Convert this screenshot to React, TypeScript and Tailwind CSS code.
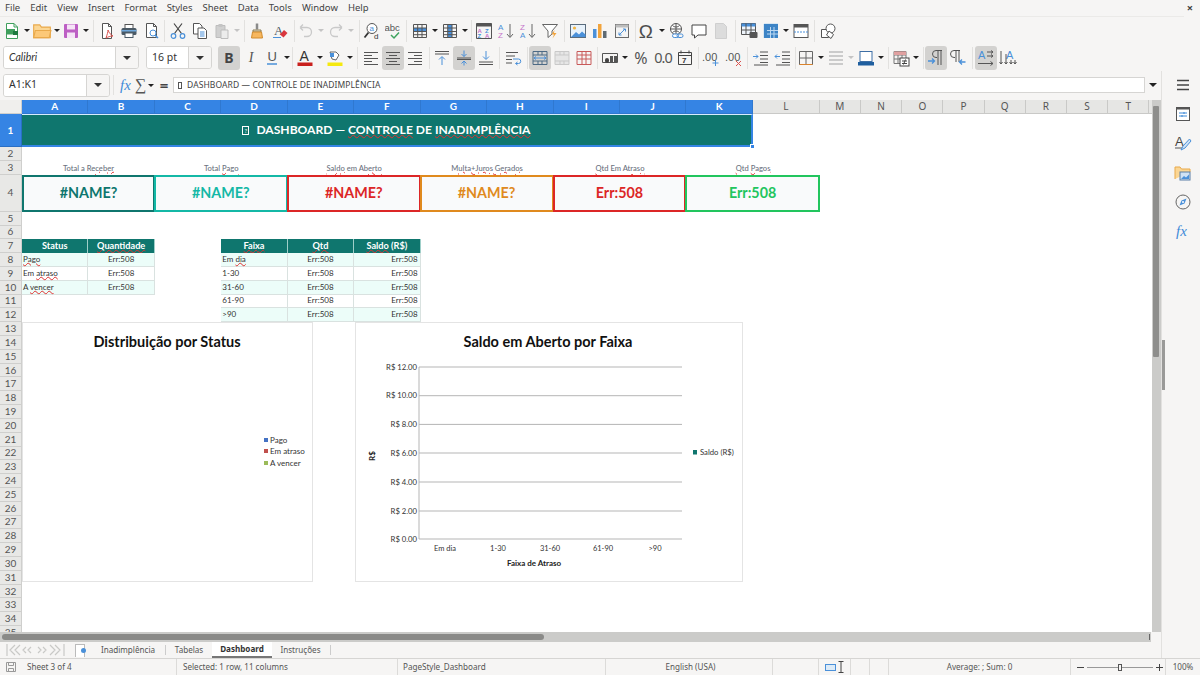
import React from "react";

const S = ({ children, big }: { children: React.ReactNode; big?: boolean }) => (
  <svg viewBox="0 0 18 18" className={big ? "w-[20px] h-[20px]" : "w-[18px] h-[18px]"} fill="none" stroke="#555" strokeWidth="1">
    {children}
  </svg>
);
const G = "#555";
const B = "#4a90d9";

const Btn = ({ children, on, className = "" }: { children?: React.ReactNode; on?: boolean; className?: string }) => (
  <div className={`w-[22px] h-[24px] shrink-0 flex items-center justify-center rounded-[3px] ${on ? "bg-[#d3d2d0]" : ""} ${className}`}>{children}</div>
);
const Drop = ({ off }: { off?: boolean }) => (
  <div className="w-[8px] h-[24px] shrink-0 flex items-center justify-center">
    <div className={`w-0 h-0 border-x-[3px] border-x-transparent border-t-[3px] ${off ? "border-t-[#c4c4c4]" : "border-t-[#222]"}`} />
  </div>
);
const Sep = ({ className = "" }: { className?: string }) => <div className={`w-px h-[22px] shrink-0 bg-[#e2e1df] ${className}`} />;

const T = ({ x, y, c, s, w, children, f }: { x: number; y: number; c: string; s: number; w?: number; f?: string; children: React.ReactNode }) => (
  <text x={x} y={y} fill={c} stroke="none" fontSize={s} fontWeight={w ?? 400} fontFamily={f ?? "'Liberation Sans', sans-serif"}>
    {children}
  </text>
);

const Grid = ({ row, col, stroke = G }: { row?: number; col?: number; stroke?: string }) => (
  <>
    {row !== undefined && <rect x="2.5" y={row} width="13" height="3" fill={B} stroke="none" />}
    {col !== undefined && <rect x={col} y="3" width="4" height="12" fill={B} stroke="none" />}
    <path d="M2.5 2.5h13v13h-13zM2.5 6h13M2.5 9.5h13M2.5 12.7h13M6.7 2.5v13M11 2.5v13" stroke={stroke} />
  </>
);
const Ln = ({ ys, x1, x2s }: { ys: number[]; x1: number[]; x2s: number[] }) => (
  <>
    {ys.map((y, i) => (
      <path key={i} d={`M${x1[i]} ${y}H${x2s[i]}`} />
    ))}
  </>
);

function Toolbar1() {
  return (
    <div className="h-[27px] flex items-center pl-[1px] bg-[#f6f5f4]">
      <Btn><S><path d="M3.5 1.5h7.5l3.5 3.5v11.5h-11z" fill="#fff" stroke="#3f9f5c" /><rect x="3" y="7" width="9" height="5.5" fill="#3f9f5c" stroke="none" /><path d="M11 1.5v3.5h3.5" stroke="#3f9f5c" /><rect x="10" y="9" width="5" height="4" fill="#1f7a3f" stroke="none" /></S></Btn>
      <Drop />
      <Btn><S big><path d="M1.5 15V3.5h5.5l1.5 2h8V15z" fill="#fbd694" stroke="#e9a94b" /><path d="M1.5 15l1.5-6.5h14L15.5 15z" fill="#fcc878" stroke="#e9a94b" /></S></Btn>
      <Drop />
      <Btn className="-ml-[1px]"><S><rect x="2" y="2" width="14" height="14" rx="1" fill="#bd5fc4" stroke="none" /><rect x="5" y="2.5" width="8" height="5" fill="#f5e4f6" stroke="none" /><rect x="5" y="10.5" width="8" height="5.5" fill="#f5e4f6" stroke="none" /></S></Btn>
      <Drop />
      <Sep className="ml-[3px] mr-[2px]" />
      <Btn><S><path d="M4.5 1.5h6l3 3v12h-9z" fill="#fff" /><path d="M10.5 1.5v3h3" /><path d="M8 16c1-3 2-6 2-8 1 3 3 5 5 6-3 0-5 1-7 2z" stroke="#d9534f" /></S></Btn>
      <Btn><S><rect x="5" y="2.5" width="8" height="4" fill="#fff" /><rect x="1.5" y="6" width="15" height="7" rx="1.5" fill="#4b5a66" stroke="none" /><rect x="1.5" y="8" width="15" height="1.5" fill="#6fa8dc" stroke="none" /><rect x="5" y="11" width="8" height="4.5" fill="#fff" stroke="#4b5a66" /></S></Btn>
      <Btn className="ml-[1px]"><S><path d="M3.5 1.5h7l3 3v11h-10z" fill="#fff" /><path d="M10.5 1.5v3h3" /><circle cx="10" cy="11" r="3" stroke={B} /><path d="M12 13l3 3" stroke={B} strokeWidth="1.5" /></S></Btn>
      <Sep className="ml-[1px] mr-[2px]" />
      <Btn><S><path d="M5 1.5l7.5 10M13 1.5l-7.5 10" stroke="#444" strokeWidth="1.2" /><circle cx="4.5" cy="14" r="2.3" stroke={B} strokeWidth="1.2" /><circle cx="13.5" cy="14" r="2.3" stroke={B} strokeWidth="1.2" /></S></Btn>
      <Btn><S><path d="M2.5 1.5h6l2.5 2.5v8h-8.5z" fill="#fff" /><path d="M7 6h6l2.5 2.5v8H7z" fill="#fff" /><path d="M9 10h4.5M9 12h4.5M9 14h4.5" stroke={B} /></S></Btn>
      <Btn><S><path d="M3 3.5h9v12H3z" fill="#d0d0d0" stroke="#bdbdbd" /><rect x="5.5" y="2" width="4" height="3" fill="#c4c4c4" stroke="none" /><path d="M8 8h7v8.5H8z" fill="#ececec" stroke="#bdbdbd" /></S></Btn>
      <Drop off />
      <Sep className="ml-[3px] mr-[1px]" />
      <Btn><S><path d="M9 1.5v6" stroke="#8a8a8a" strokeWidth="2.5" /><path d="M5 8h8v2H5z" fill="#e9e0c8" stroke="#8a7a50" /><path d="M4.5 10h9l1 6h-11z" fill="#f7b75e" stroke="#d18b2d" /></S></Btn>
      <Btn className="ml-[1px]"><S><T x={3} y={13} c="#4a5560" s={13} f="'Liberation Serif', serif">A</T><path d="M2 15.5h8" stroke={B} /><path d="M9 12.5l4-4.5 3.5 3-4 4.5z" fill="#d9363e" stroke="none" /></S></Btn>
      <Sep className="ml-[3px]" />
      <Btn><S><path d="M3 5.5l3-3M3 5.5l3 3M3 5.5h7a4.5 4.5 0 0 1 0 9H7" stroke="#c9c9c9" strokeWidth="1.3" /></S></Btn>
      <Drop off />
      <Btn><S><path d="M15 5.5l-3-3M15 5.5l-3 3M15 5.5H8a4.5 4.5 0 0 0 0 9h3" stroke="#c9c9c9" strokeWidth="1.3" /></S></Btn>
      <Drop off />
      <Sep className="ml-[4px] mr-[1px]" />
      <Btn><S><circle cx="9" cy="6.5" r="5" fill="#fff" /><path d="M5.5 10.5L1.5 15.5" stroke="#333" strokeWidth="1.8" /><T x={6.5} y={9} c={B} s={8}>a</T><T x={11} y={17} c="#333" s={8}>d</T></S></Btn>
      <Btn><S><T x={-0.5} y={8.5} c="#555" s={9.5}>abc</T><path d="M6 13l3 3 5-5.5" stroke="#3fa45f" strokeWidth="1.5" /></S></Btn>
      <Sep className="ml-[1px] mr-[2px]" />
      <Btn><S><Grid row={6} /></S></Btn>
      <Drop />
      <Btn><S><Grid col={7} /></S></Btn>
      <Drop />
      <Sep className="ml-[2px] mr-[1px]" />
      <Btn><S><path d="M1.5 1.5h15v15h-15z" /><rect x="1.5" y="1.5" width="15" height="3" fill="#555" stroke="none" /><T x={2.5} y={10.5} c="#c573c9" s={6} w={700}>A</T><T x={2.5} y={16} c={B} s={6} w={700}>Z</T><T x={10} y={10.5} c={B} s={6} w={700}>Z</T><T x={10} y={16} c="#c573c9" s={6} w={700}>A</T></S></Btn>
      <Btn><S><T x={1} y={8} c={B} s={8}>A</T><T x={1} y={16} c="#c573c9" s={8}>Z</T><path d="M13 2v13M10 12l3 3.5 3-3.5" stroke="#666" /></S></Btn>
      <Btn><S><T x={1} y={8} c="#c573c9" s={8}>Z</T><T x={1} y={16} c={B} s={8}>A</T><path d="M13 2v13M10 12l3 3.5 3-3.5" stroke="#666" /></S></Btn>
      <Btn><S><path d="M1.5 2.5h15l-5.5 6.5v3l-4 3.5V9z" fill="#fff" stroke="#666" /><path d="M13.5 8l-3 4.5h2.5l-1.5 4 4-5.5h-2.5z" fill="#f2a43c" stroke="none" /></S></Btn>
      <Sep className="ml-[3px] mr-[2px]" />
      <Btn><S><rect x="1.5" y="2.5" width="15" height="13" fill="#e8f2fb" stroke="#5a6c7d" /><circle cx="5.5" cy="6" r="1.6" fill="#f2b544" stroke="none" /><path d="M2 15l5-5 3 2.5 3-3 3.5 3V15z" fill={B} stroke="none" /></S></Btn>
      <Btn><S><rect x="2" y="7" width="3.5" height="9" fill={B} stroke="none" /><rect x="7" y="2" width="3.5" height="14" fill="#f2a43c" stroke="none" /><rect x="12" y="9" width="3.5" height="7" fill="#5f6a72" stroke="none" /></S></Btn>
      <Btn><S><rect x="2.5" y="2.5" width="13" height="13" fill="#f4f4f4" stroke="#6a6a6a" /><rect x="2.5" y="2.5" width="13" height="3" fill="#bdbdbd" stroke="none" /><path d="M6 13l6-6M10 7h2.5v2.5M6 10.5V13h2.5" stroke={B} /></S></Btn>
      <Sep className="ml-[2px]" />
      <Btn><S big><T x={1.5} y={15} c="#4d4d4d" s={17}>Ω</T></S></Btn>
      <Drop />
      <Btn><S><circle cx="8" cy="7" r="5.5" fill="#fff" /><path d="M2.5 7h11M8 1.5v11M4.5 3.5c2 2 5 2 7 0M4.5 10.5c2-2 5-2 7 0" /><rect x="4.5" y="12" width="6" height="3.5" rx="1.7" fill="#fff" stroke={B} /><rect x="9" y="12" width="6" height="3.5" rx="1.7" stroke={B} /></S></Btn>
      <Btn><S><path d="M2 3h14v10H8l-3.5 3v-3H2z" fill="#fff" stroke="#444" /></S></Btn>
      <Btn><S><path d="M3.5 1.5h8l3 3v12h-11z" fill="#dcdcdc" stroke="#cfcfcf" /></S></Btn>
      <Sep className="ml-[3px] mr-[2px]" />
      <Btn><S><path d="M1.5 1.5h14v11h-14z" fill="#eef4fb" stroke={G} /><rect x="1.5" y="1.5" width="14" height="3" fill={B} stroke="none" /><path d="M1.5 8h14M6 1.5v11M11 1.5v11" /><rect x="9.5" y="10" width="8" height="6" rx="1" fill="#555" stroke="none" /></S></Btn>
      <Btn><S><rect x="5" y="5" width="11" height="11" fill="#3d84c6" stroke="none" /><path d="M2 2h14M2 2v14M5 8.5h11M5 12h11M8.5 5v11M12 5v11" stroke="#bcd8f1" /><rect x="2" y="2" width="14" height="3" fill="#3d84c6" stroke="none" /><rect x="2" y="2" width="3" height="14" fill="#3d84c6" stroke="none" /></S></Btn>
      <Drop />
      <Btn><S><rect x="2" y="2.5" width="14" height="13" fill="#fff" /><rect x="2" y="2.5" width="14" height="3" fill="#555" stroke="none" /><path d="M2 10h14" stroke={B} strokeDasharray="2 1" /></S></Btn>
      <Sep className="ml-[2px] mr-[2px]" />
      <Btn><S><path d="M2.5 7.5h7v8h-7z" fill="#fff" /><circle cx="11.5" cy="6.5" r="4.5" fill="#fff" /><path d="M10 9l4.5 3.5L12 16.5 7.5 13z" fill="#fff" /></S></Btn>
    </div>
  );
}

const FieldBox = ({ w, label, arrow, italic, f }: { w: string; label: string; arrow: string; italic?: boolean; f?: string }) => (
  <div className={`${w} h-[23px] shrink-0 flex rounded-[3px] border border-[#d6d5d3] overflow-hidden`}>
    <div className={`flex-1 bg-white flex items-center pl-[5px] text-[10.5px] text-[#333] ${italic ? "italic" : ""} ${f ?? ""}`}>{label}</div>
    <div className={`${arrow} bg-[#f6f5f4] border-l border-[#d6d5d3] flex items-center justify-center`}>
      <div className="w-0 h-0 border-x-[4px] border-x-transparent border-t-[4px] border-t-[#333]" />
    </div>
  </div>
);

function Toolbar2() {
  return (
    <div className="h-[27px] flex items-center pl-[3px] bg-[#f6f5f4]">
      <FieldBox w="w-[136px]" label="Calibri" arrow="w-[23px]" italic f="font-['Lato',sans-serif]" />
      <div className="w-[7px]" />
      <FieldBox w="w-[66px]" label="16 pt" arrow="w-[23px]" />
      <Sep className="ml-[2px] mr-[3px] opacity-0" />
      <Btn on><span className="text-[14px] font-bold text-[#444]">B</span></Btn>
      <Btn><span className="text-[14px] italic text-[#555] font-['Liberation_Serif',serif]">I</span></Btn>
      <Btn className="-ml-[1px]"><S><T x={4.5} y={12} c="#555" s={13}>U</T><path d="M4 15h10" stroke={B} strokeWidth="1.5" /></S></Btn>
      <Drop />
      <Sep className="ml-[1px] mr-[1px]" />
      <Btn><S><T x={3.5} y={12} c="#333" s={14}>A</T><rect x="1.5" y="13.5" width="15" height="3.5" fill="#c9211e" stroke="none" /></S></Btn>
      <Drop />
      <Btn><S><path d="M4 3h6l3 3-3 5-4-1z" fill="#fff" stroke="#666" /><rect x="4" y="4" width="4" height="4" fill={B} stroke="none" /><rect x="1.5" y="13.5" width="15" height="3.5" fill="#f5e90f" stroke="none" /></S></Btn>
      <Drop />
      <Sep className="ml-[3px] mr-[2px]" />
      <Btn><S><Ln ys={[3.5, 6.5, 9.5, 12.5, 15.5]} x1={[2, 2, 2, 2, 2]} x2s={[16, 10, 16, 10, 16]} /></S></Btn>
      <Btn on><S><Ln ys={[3.5, 6.5, 9.5, 12.5, 15.5]} x1={[2, 5, 2, 5, 2]} x2s={[16, 13, 16, 13, 16]} /></S></Btn>
      <Btn><S><Ln ys={[3.5, 6.5, 9.5, 12.5, 15.5]} x1={[2, 8, 2, 8, 2]} x2s={[16, 16, 16, 16, 16]} /></S></Btn>
      <Sep className="ml-[3px] mr-[1px]" />
      <Btn><S><path d="M2 2.5h14M2 5h14" /><path d="M9 16V8M6 10.5L9 7.5l3 3" stroke={B} /></S></Btn>
      <Btn on><S><path d="M2 9h14M2 10.5h14" /><path d="M9 1.5v6M6.5 5L9 7.5 11.5 5M9 16.5v-4M6.5 14.5L9 12l2.5 2.5" stroke={B} /></S></Btn>
      <Btn><S><path d="M2 13h14M2 15.5h14" /><path d="M9 2v8M6 7.5l3 3 3-3" stroke={B} /></S></Btn>
      <Sep className="ml-[2px] mr-[2px]" />
      <Btn><S><path d="M2 3.5h12M2 7h9M2 10.5h6M2 14h6" /><path d="M9 10h5.5a2 2 0 0 1 0 4.5H12M13.5 13l-2 1.5 2 1.5" stroke={B} /></S></Btn>
      <Sep className="ml-[3px] mr-[1px]" />
      <Btn on><S><path d="M2 2.5h14v13H2zM2 6h14M2 12h14M7 2.5V6M11 2.5V6M7 12v3.5M11 12v3.5" stroke="#4d6a85" /><path d="M3 9h12M3 9l2-1.5M3 9l2 1.5M15 9l-2-1.5M15 9l-2 1.5" stroke={B} /></S></Btn>
      <Btn><S><path d="M2 2.5h14v13H2zM2 6h14M2 12h14M7 2.5V6M11 2.5V6M7 12v3.5M11 12v3.5" stroke="#c9c9c9" fill="#e6e6e6" /></S></Btn>
      <Btn><S><path d="M2 2.5h14v13H2zM2 6h14M2 10h14M7 2.5v13M11 2.5v13" stroke="#c85a5a" /></S></Btn>
      <Sep className="ml-[2px] mr-[1px]" />
      <Btn><S><path d="M1.5 4.5h15v9h-15z" /><rect x="4" y="9" width="4" height="5" rx="2" fill="#444" stroke="none" /><rect x="9" y="7" width="3" height="7" fill="#555" stroke="none" /><rect x="13" y="7" width="3" height="7" fill="#555" stroke="none" /></S></Btn>
      <Drop />
      <Btn className="ml-[1px]"><span className="text-[16px] text-[#555] font-['Noto_Sans',sans-serif]">%</span></Btn>
      <Btn><span className="text-[14.5px] text-[#555] tracking-[-1px] font-['Noto_Sans',sans-serif]">0.0</span></Btn>
      <Btn><S><path d="M2.5 3.5h13v12h-13zM2.5 6.5h13M5 1.5v3M13 1.5v3" stroke="#444" /><T x={6} y={14} c="#333" s={8} w={700}>7</T></S></Btn>
      <Sep className="ml-[2px] mr-[1px]" />
      <Btn><S><T x={0} y={12} c="#555" s={11}>.00</T><path d="M13.5 11v6M10.5 14h6" stroke={B} /></S></Btn>
      <Btn className="ml-[1px]"><S><T x={0} y={12} c="#555" s={11}>.00</T><path d="M11 12l5 5M16 12l-5 5" stroke="#d9534f" /></S></Btn>
      <Sep className="ml-[2px] mr-[2px]" />
      <Btn><S><path d="M8 3h8M8 6.5h8M8 10h8M8 13.5h8M2 16h14" /><path d="M1 7.5h5M4 5.5l2 2-2 2" stroke={B} /></S></Btn>
      <Btn><S><path d="M8 3h8M8 6.5h8M8 10h8M8 13.5h8M2 16h14" /><path d="M6 7.5H1M3 5.5l-2 2 2 2" stroke={B} /></S></Btn>
      <Sep className="ml-[1px] -mr-[1px] opacity-100" />
      <Btn><S><path d="M2.5 2.5h13v13h-13zM9 2.5v13M2.5 9h13" stroke="#666" /><path d="M2.5 15.5h13" stroke="#d9822b" /></S></Btn>
      <Drop />
      <Btn><S><path d="M2 3h14M2 7h14M2 11h14M2 15h14" stroke="#bdbdbd" strokeWidth="1.6" /></S></Btn>
      <Drop off />
      <Btn><S><rect x="3" y="2.5" width="12" height="10" fill="#fff" stroke="#3d6ea5" /><rect x="1" y="13" width="16" height="3.5" fill="#1f5f9f" stroke="none" /></S></Btn>
      <Drop />
      <Sep className="ml-[3px] mr-[1px]" />
      <Btn><S><path d="M2 2.5h12v12H2zM2 6h12M6 2.5v12M10 2.5v12M2 10h12" stroke="#777" /><rect x="2" y="2.5" width="12" height="3.5" fill="#e0a0a0" stroke="none" /><rect x="8" y="9" width="9" height="8" fill="#fff" stroke="#444" /><path d="M10 12h5M10 14.5h5M13.5 10.5l-2 5" stroke="#444" /></S></Btn>
      <Drop />
      <Sep className="ml-[3px] mr-[1px]" />
      <Btn on><S><path d="M15 1.5H9a3.5 3.5 0 0 0 0 7h1M11 1.5V16M14 1.5V16" /><path d="M1 12h6M5 9.5L7.5 12 5 14.5" stroke={B} strokeWidth="1.3" /></S></Btn>
      <Btn><S><path d="M11 1.5H5a3.5 3.5 0 0 0 0 7h1M7 1.5V13M10 1.5V13" /><path d="M16.5 13h-6M13 10.5L10.5 13l2.5 2.5" stroke={B} strokeWidth="1.3" /></S></Btn>
      <Sep className="ml-[3px] mr-[2px]" />
      <Btn on><S><T x={1} y={10} c={B} s={11}>A</T><path d="M1 14.5h15M13.5 12.5l2.5 2-2.5 2M10 3h6M10 7h6M14 1.5l2 1.5-2 1.5M14 5.5L16 7l-2 1.5" /></S></Btn>
      <Btn><S><T x={7} y={10} c={B} s={11}>A</T><path d="M2 2v13M.5 13l1.5 2 1.5-2M7 5v10M5.5 13L7 15l1.5-2M12 11v4M10.5 13l1.5 2 1.5-2M16 11v4M14.5 13l1.5 2 1.5-2" /></S></Btn>
    </div>
  );
}

const W = ({ children }: { children: React.ReactNode }) => (
  <span className="underline decoration-wavy decoration-[#e03131] decoration-1 underline-offset-[0px]">{children}</span>
);

function FormulaBar() {
  return (
    <div className="h-[29px] shrink-0 flex items-center pl-[3px] pb-[1px]">
      <FieldBox w="w-[107px]" label="A1:K1" arrow="w-[23px]" />
      <div className="w-px h-[20px] bg-[#e2e1df] ml-[3px]" />
      <div className="ml-[6px] w-[16px] text-[15px] italic text-[#3f8ad8] font-['Liberation_Serif',serif] leading-none">fx</div>
      <div className="-ml-[1px] w-[12px] text-[16px] text-[#555] leading-none font-['Liberation_Serif',serif]">∑</div>
      <Drop />
      <div className="ml-[3px] w-[12px] text-center text-[15px] text-[#444] font-bold leading-none">=</div>
      <div className="ml-[3px] flex-1 h-[16px] bg-white border border-[#d6d5d3] flex items-center pl-[4px] text-[8.5px] text-[#444] tracking-[0.1px]">
        <span className="inline-block w-[4px] h-[7px] border border-[#555] mr-[5px]" />
        DASHBOARD — CONTROLE DE INADIMPLÊNCIA
      </div>
      <div className="w-[16px] flex justify-center"><div className="w-0 h-0 border-x-[4px] border-x-transparent border-t-[4px] border-t-[#222]" /></div>
    </div>
  );
}

const cols = ["A", "B", "C", "D", "E", "F", "G", "H", "I", "J", "K", "L", "M", "N", "O", "P", "Q", "R", "S", "T"];

const RH = ({ n }: { n: number }) => (
  <div className={`flex items-center justify-center text-[10px] border-r border-b ${n === 1 ? "bg-[#3584e4] text-white font-bold border-[#2a6fc4]" : "bg-[#e8e8e6] text-[#555] border-[#cfcfcd]"}`}>{n}</div>
);
const Blank = ({ span = "col-span-21" }: { span?: string }) => <div className={span} />;
const Label = ({ children }: { children: React.ReactNode }) => (
  <div className="relative z-10 col-span-2 flex items-end justify-center pb-[1px] text-[7.6px] leading-[11px] text-[#6b7280] whitespace-nowrap font-medium"><span>{children}</span></div>
);
const Kpi = ({ cls, children }: { cls: string; children: React.ReactNode }) => (
  <div className={`col-span-2 border-2 bg-[#f9fafb] flex items-center justify-center pb-[1px] text-[14.3px] font-bold ${cls}`}>{children}</div>
);
const Hd = ({ children }: { children: React.ReactNode }) => (
  <div className="bg-[#0f766e] text-white text-[9.2px] font-bold flex items-center justify-center border-r border-[#9fcfc9] whitespace-nowrap"><span>{children}</span></div>
);
const Cl = ({ mint, a, children }: { mint?: boolean; a: "l" | "c" | "r"; children?: React.ReactNode }) => (
  <div className={`${mint ? "bg-[#ecfdf9]" : "bg-white"} border-r border-b border-[#d9e2e0] text-[8px] text-[#333] flex items-center whitespace-nowrap px-[1px] pb-[1px] ${a === "l" ? "justify-start" : a === "c" ? "justify-center" : "justify-end pr-[2px]"}`}><span>{children}</span></div>
);

function Sheet() {
  const rowsRest = Array.from({ length: 23 }, (_, i) => i + 13);
  return (
    <div className="relative flex-1 overflow-hidden bg-white font-['Lato',sans-serif]">
      <div className="grid h-[532px] grid-cols-[22px_repeat(11,66.45px)_67px_repeat(8,41.2px)_1fr] grid-rows-[14px_33px_14px_13.5px_37.5px_13.5px_repeat(30,13.82px)]">
        <div className="bg-[#f0efed] border-r border-b border-[#cfcfcd]" />
        {cols.map((c, i) => (
          <div key={c} className={`flex items-center justify-center text-[10px] border-r border-b ${i < 11 ? "bg-[#3584e4] text-white font-bold border-[#2f78d0]" : "bg-[#e6e6e4] text-[#555] border-[#c9c9c7] font-['Noto_Sans',sans-serif]"}`}>{c}</div>
        ))}
        <div className="bg-[#e6e6e4] border-b border-[#c9c9c7]" />

        <RH n={1} />
        <div className="relative col-span-11 bg-[#0f766e] border-t border-b-2 border-r-2 border-t-[#d6ecff] border-b-[#3584e4] border-r-[#3584e4] flex items-center justify-center text-white text-[12.1px] font-bold">
          <span className="inline-flex items-center justify-center w-[7px] h-[9px] border border-white text-[6px] font-normal mr-[7px]">?</span>
          <span>DASHBOARD — <W>CONTROLE</W> DE <W>INADIMPLÊNCIA</W></span>
          <div className="absolute -right-[4px] -bottom-[4px] w-[5px] h-[5px] bg-[#3584e4] border border-white" />
        </div>
        <Blank span="col-span-10" />

        <RH n={2} /><Blank />

        <RH n={3} />
        <Label>Total a <W>Receber</W></Label>
        <Label>Total <W>Pago</W></Label>
        <Label><W>Saldo</W> em <W>Aberto</W></Label>
        <Label><W>Multa+Juros Gerados</W></Label>
        <Label><W>Qtd</W> Em <W>Atraso</W></Label>
        <Label><W>Qtd</W> <W>Pagos</W></Label>
        <Blank span="col-span-9" />

        <RH n={4} />
        <Kpi cls="border-[#0f766e] text-[#0f766e]">#NAME?</Kpi>
        <Kpi cls="border-[#14b8a6] text-[#14b8a6] -ml-[1px]">#NAME?</Kpi>
        <Kpi cls="border-[#dc2626] text-[#dc2626] -ml-[1px]">#NAME?</Kpi>
        <Kpi cls="border-[#e08a1e] text-[#e08a1e] -ml-[1px]">#NAME?</Kpi>
        <Kpi cls="border-[#dc2626] text-[#dc2626] -ml-[1px]">Err:508</Kpi>
        <Kpi cls="border-[#22c55e] text-[#22c55e] -ml-[1px]">Err:508</Kpi>
        <Blank span="col-span-9" />

        <RH n={5} /><Blank />
        <RH n={6} /><Blank />

        <RH n={7} />
        <Hd>Status</Hd><Hd><W>Quantidade</W></Hd><Blank span="col-span-1" />
        <Hd><W>Faixa</W></Hd><Hd><W>Qtd</W></Hd><Hd><W>Saldo</W> (R$)</Hd><Blank span="col-span-15" />

        <RH n={8} />
        <Cl mint a="l"><W>Pago</W></Cl><Cl mint a="c">Err:508</Cl><Blank span="col-span-1" />
        <Cl mint a="l">Em <W>dia</W></Cl><Cl mint a="c">Err:508</Cl><Cl mint a="r">Err:508</Cl><Blank span="col-span-15" />

        <RH n={9} />
        <Cl a="l">Em <W>atraso</W></Cl><Cl a="c">Err:508</Cl><Blank span="col-span-1" />
        <Cl a="l">1-30</Cl><Cl a="c">Err:508</Cl><Cl a="r">Err:508</Cl><Blank span="col-span-15" />

        <RH n={10} />
        <Cl mint a="l">A <W>vencer</W></Cl><Cl mint a="c">Err:508</Cl><Blank span="col-span-1" />
        <Cl mint a="l">31-60</Cl><Cl mint a="c">Err:508</Cl><Cl mint a="r">Err:508</Cl><Blank span="col-span-15" />

        <RH n={11} />
        <Blank span="col-span-3" />
        <Cl a="l">61-90</Cl><Cl a="c">Err:508</Cl><Cl a="r">Err:508</Cl><Blank span="col-span-15" />

        <RH n={12} />
        <Blank span="col-span-3" />
        <Cl mint a="l">&gt;90</Cl><Cl mint a="c">Err:508</Cl><Cl mint a="r">Err:508</Cl><Blank span="col-span-15" />

        {rowsRest.map((n) => (
          <React.Fragment key={n}>
            <RH n={n} />
            <Blank />
          </React.Fragment>
        ))}
      </div>

      <div className="absolute left-[22px] top-[222px] w-[291px] h-[260px] bg-white border border-[#e4e4e4]">
        <svg viewBox="1 1 289 258" className="w-full h-full">
          <text x="145" y="25" textAnchor="middle" fontSize="14.5" fontWeight="700" fill="#111">Distribuição por Status</text>
          <rect x="242" y="116" width="4" height="4" fill="#4472c4" />
          <text x="248" y="121" fontSize="8" fill="#333">Pago</text>
          <rect x="242" y="127" width="4" height="4" fill="#c0504d" />
          <text x="248" y="132" fontSize="8" fill="#333">Em atraso</text>
          <rect x="242" y="139" width="4" height="4" fill="#9bbb59" />
          <text x="248" y="144" fontSize="8" fill="#333">A vencer</text>
        </svg>
      </div>

      <div className="absolute left-[355px] top-[222px] w-[388px] h-[260px] bg-white border border-[#e4e4e4]">
        <svg viewBox="1 1 386 258" className="w-full h-full">
          <text x="193" y="25" textAnchor="middle" fontSize="14.5" fontWeight="700" fill="#111">Saldo em Aberto por Faixa</text>
          {[45, 73.7, 102.4, 131, 160, 189, 217].map((y) => (
            <path key={y} d={`M64 ${y}H327`} stroke="#b5b5b5" strokeWidth="1" />
          ))}
          <path d="M64 45V217" stroke="#b5b5b5" />
          {["R$ 12.00", "R$ 10.00", "R$ 8.00", "R$ 6.00", "R$ 4.00", "R$ 2.00", "R$ 0.00"].map((t, i) => (
            <text key={t} x="62" y={[47.5, 76.2, 104.9, 133.5, 162.5, 191.5, 219.5][i]} textAnchor="end" fontSize="7.7" fill="#333">{t}</text>
          ))}
          {["Em dia", "1-30", "31-60", "61-90", ">90"].map((t, i) => (
            <text key={t} x={[90, 143, 195, 248, 300][i]} y="229" textAnchor="middle" fontSize="7.5" fill="#333">{t}</text>
          ))}
          <text x="179" y="244" textAnchor="middle" fontSize="8" fontWeight="700" fill="#222">Faixa de Atraso</text>
          <text x="0" y="0" transform="translate(20 134) rotate(-90)" textAnchor="middle" fontSize="8" fontWeight="700" fill="#222">R$</text>
          <rect x="338" y="128" width="4" height="4.5" fill="#0f766e" />
          <text x="345" y="132.5" fontSize="7.7" fill="#333">Saldo (R$)</text>
        </svg>
      </div>
    </div>
  );
}

const VScroll = () => (
  <div className="w-[9px] bg-[#cbcbc9] shrink-0 pt-[6px] pl-[1px] pr-[2px]">
    <div className="h-[251px] bg-[#8e8e8c] rounded-[1px]" />
  </div>
);

const HScroll = () => (
  <div className="h-[10px] shrink-0 bg-[#cbcbc9] flex items-center pl-[2px] w-[1151px] relative">
    <div className="w-[542px] h-[6px] bg-[#8a8a88] rounded-full" />
    <div className="absolute right-[1px] top-[2px] w-px h-[6px] bg-[#666]" />
  </div>
);

const NavIcons = () => (
  <svg viewBox="0 0 60 16" className="w-[60px] h-[16px] ml-[6px] shrink-0" fill="none" stroke="#c9c9c7" strokeWidth="1.2">
    <path d="M1 2v12M9 3L4 8l5 5M14 3L9 8l5 5M20 5l-3 3 3 3M25 5l-3 3 3 3M32 5l3 3-3 3M37 5l3 3-3 3M44 3l5 5-5 5M49 3l5 5-5 5M58 2v12" />
  </svg>
);

function Tabs() {
  const Tab = ({ t, active }: { t: string; active?: boolean }) => (
    <div className={`h-full flex items-center justify-center text-[8.1px] ${active ? "bg-white border-b-2 border-[#777] font-bold text-[#333] w-[60px]" : "text-[#555]"}`}>{t}</div>
  );
  return (
    <div className="h-[16px] shrink-0 flex items-center bg-[#f6f5f4]">
      <NavIcons />
      <div className="relative ml-[9px] w-[10px] h-[13px] bg-white border border-[#bbb] border-b-0" />
      <div className="shrink-0 w-[5px] h-[5px] rounded-full bg-[#4a90d9] -ml-[4px] mr-[11px] relative" />
      <div className="w-[62px] h-full flex justify-center"><Tab t="Inadimplência" /></div>
      <div className="w-px h-[10px] bg-[#ccc] ml-[6px] mr-[9px]" />
      <div className="w-[28px] h-full flex justify-center"><Tab t="Tabelas" /></div>
      <div className="w-px h-[10px] bg-[#ccc] ml-[9px] -mr-[1px]" />
      <Tab t="Dashboard" active />
      <div className="ml-[9px] w-[39px] h-full flex justify-center"><Tab t="Instruções" /></div>
      <div className="w-px h-[10px] bg-[#ccc] ml-[10px]" />
    </div>
  );
}

const StatusCell = ({ w, children, c }: { w: string; children?: React.ReactNode; c?: boolean }) => (
  <div className={`${w} shrink-0 h-full flex items-center border-r border-[#dcdbd9] whitespace-nowrap overflow-hidden ${c ? "justify-center" : "pl-[6px]"}`}>{children}</div>
);

function StatusBar() {
  return (
    <div className="h-[17px] shrink-0 flex items-center border-t border-[#d6d5d3] bg-[#f6f5f4] text-[8.1px] text-[#555]">
      <div className="w-[21px] flex justify-center">
        <svg viewBox="0 0 12 12" className="w-[12px] h-[12px]" fill="none" stroke="#999"><path d="M1.5 1.5h9v9h-9zM3.5 1.5v3h5v-3M3.5 10.5v-3h5v3" /></svg>
      </div>
      <StatusCell w="w-[156px]">Sheet 3 of 4</StatusCell>
      <StatusCell w="w-[221px]">Selected: 1 row, 11 columns</StatusCell>
      <StatusCell w="w-[208px]"><span className="ml-[-1px]">PageStyle_Dashboard</span></StatusCell>
      <StatusCell w="w-[167px]" c><span className="ml-[3px]">English (USA)</span></StatusCell>
      <StatusCell w="w-[46px]" />
      <StatusCell w="w-[32px]" c>
        <div className="w-[11px] h-[7px] border border-[#4a90d9] bg-[#dcebf8]" />
        <svg viewBox="0 0 8 14" className="w-[8px] h-[14px] ml-[1px]" fill="none" stroke="#444"><path d="M1.5 1.5h5M4 1.5v11M1.5 12.5h5" /></svg>
      </StatusCell>
      <StatusCell w="w-[19px]" />
      <StatusCell w="w-[19px]" />
      <StatusCell w="w-[182px]" c>Average: ; Sum: 0</StatusCell>
      <div className="w-[95px] flex items-center pl-[6px] text-[#444] border-r border-[#dcdbd9] h-full">
        <span className="w-[7px] h-px bg-[#444] mr-[3px]" />
        <div className="relative w-[66px] h-px bg-[#999] flex justify-center items-center">
          <span className="w-[4px] h-[7px] bg-[#f6f5f4] border border-[#555] absolute" />
        </div>
        <span className="relative w-[7px] h-[7px] ml-[3px]">
          <span className="absolute left-0 top-[3px] w-[7px] h-px bg-[#444]" />
          <span className="absolute left-[3px] top-0 w-px h-[7px] bg-[#444]" />
        </span>
      </div>
      <div className="flex-1 text-center">100%</div>
    </div>
  );
}

function Sidebar() {
  return (
    <div className="w-[35px] shrink-0 flex flex-col items-center pl-[1px] pt-[5px] gap-[11.2px] bg-[#f6f5f4]">
      <svg viewBox="0 0 18 18" className="w-[18px] h-[18px]" fill="none" stroke="#444" strokeWidth="1.3"><path d="M3 4.5h12M3 9h12M3 13.5h12" /></svg>
      <svg viewBox="0 0 18 18" className="w-[18px] h-[18px]" fill="none" stroke="#555"><rect x="2.5" y="2.5" width="13" height="13" fill="#fff" /><rect x="2.5" y="2.5" width="13" height="2" fill="#555" stroke="none" /><path d="M5 8h8M5 11h8" stroke="#3f8ad8" /><path d="M10 7v2M8 10v2" stroke="#3f8ad8" /></svg>
      <svg viewBox="0 0 18 18" className="w-[18px] h-[18px]" fill="none" stroke="#4a90d9"><text x="1" y="12" fontSize="13" fill="#444" stroke="none" fontFamily="'Liberation Sans', sans-serif">A</text><path d="M1 14h8" stroke="#555" /><path d="M15.5 5L9 12l-2 4 4-2 6-7z" fill="#cfe2f5" /></svg>
      <svg viewBox="0 0 18 18" className="w-[18px] h-[18px]" fill="none" stroke="#e9a94b"><path d="M1 15V3h5l1.5 2H16v3" fill="#fbd694" /><rect x="6" y="8" width="10" height="8" fill="#cfe2f5" stroke="#5a7fa5" /><path d="M7 15l3-3 2 1.5 3-3v4.5z" fill="#4a90d9" stroke="none" /></svg>
      <svg viewBox="0 0 18 18" className="w-[18px] h-[18px]" fill="none" stroke="#666"><circle cx="9" cy="9" r="7" /><path d="M12.5 5.5L10.5 10.5 5.5 12.5 7.5 7.5z" fill="#4a90d9" stroke="none" /><circle cx="9" cy="9" r="1" fill="#fff" stroke="none" /></svg>
      <svg viewBox="0 0 18 18" className="w-[18px] h-[18px]"><text x="2" y="14" fontSize="15" fontStyle="italic" fill="#3f8ad8" fontFamily="'Liberation Serif', serif">fx</text></svg>
    </div>
  );
}

export default function App() {
  return (
    <div className="w-[1200px] h-[675px] overflow-hidden flex flex-col bg-[#f6f5f4] font-['Noto_Sans',sans-serif]">
      <div className="h-[17px] shrink-0 flex items-center text-[9.5px] text-[#444] pl-[5px] relative">
        <div className="flex gap-[10px]">
          {["File", "Edit", "View", "Insert", "Format", "Styles", "Sheet", "Data", "Tools", "Window", "Help"].map((m) => (
            <span key={m}>{m}</span>
          ))}
        </div>
        <span className="absolute right-[7px] top-0 text-[11px] font-bold text-[#444] leading-[16px]">×</span>
        <div className="absolute left-0 right-[16px] bottom-0 h-px bg-[#ebeae8]" />
      </div>
      <Toolbar1 />
      <Toolbar2 />
      <div className="flex-1 min-h-0 flex">
        <div className="w-[1161px] shrink-0 flex flex-col">
          <FormulaBar />
          <div className="flex h-[532px] shrink-0">
            <Sheet />
            <VScroll />
          </div>
          <HScroll />
          <Tabs />
        </div>
        <div className="w-[4px] shrink-0 flex items-center border-l border-[#e2e1df]">
          <div className="w-[4px] h-[50px] bg-[#9a9a98]" />
        </div>
        <Sidebar />
      </div>
      <StatusBar />
    </div>
  );
}
